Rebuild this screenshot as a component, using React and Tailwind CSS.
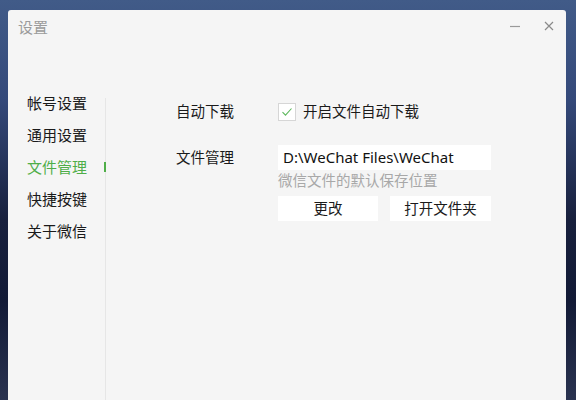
import React from 'react';

const menu = ['帐号设置', '通用设置', '文件管理', '快捷按键', '关于微信'];

const Settings = () => {
    const active = '文件管理';

    return (
        <div
            className="w-[576px] h-[400px] overflow-hidden bg-[linear-gradient(180deg,#415b88_0%,#34497a_25%,#18203d_55%,#121a36_75%,#2a3350_100%)]"
            style={{ fontFamily: '"Noto Sans", "Noto Sans CJK SC", sans-serif' }}
        >
            <div className="mt-[10px] ml-[8px] w-[558px] h-[400px] bg-[#f5f5f5] rounded-t-[3px] flex flex-col">
                {/* Title bar */}
                <div className="h-[77px] flex items-start justify-between">
                    <div className="pl-[10px] pt-[7px] text-[15px] leading-[20px] text-[#9b9b9b]">设置</div>
                    <div className="flex items-center gap-[20px] pt-[9px] pr-[10px]">
                        <svg width="14" height="14" viewBox="0 0 14 14">
                            <path d="M2 7.5h10" stroke="#9a9a9a" strokeWidth="1.2" />
                        </svg>
                        <svg width="14" height="14" viewBox="0 0 14 14">
                            <path d="M3 3l8 8M11 3l-8 8" stroke="#8a8a8a" strokeWidth="1.2" />
                        </svg>
                    </div>
                </div>

                {/* Body */}
                <div className="flex flex-1">
                    {/* Sidebar */}
                    <div className="w-[97px] shrink-0">
                        {menu.map(item => (
                            <div
                                key={item}
                                className={`h-[32px] flex items-center pl-[19px] text-[15px] ${item === active ? 'text-[#4fae48]' : 'text-[#1a1a1a]'}`}
                            >
                                {item}
                            </div>
                        ))}
                    </div>
                    <div className="relative w-px mt-[11px] bg-[#e6e6e6] shrink-0">
                        <div className="absolute left-[-1px] top-[64px] w-[2px] h-[10px] bg-[#4fae48]" />
                    </div>

                    {/* Content */}
                    <div className="pl-[70px] pt-[16px] text-[14.5px] text-[#1a1a1a]">
                        <div className="flex items-center h-[18px]">
                            <div className="w-[102px]">自动下载</div>
                            <div className="w-[18px] h-[18px] bg-white border border-[#d6d6d6] flex items-center justify-center">
                                <svg width="12" height="12" viewBox="0 0 12 12">
                                    <path d="M1.5 6.2l3 3L10.5 2.5" fill="none" stroke="#5cb85c" strokeWidth="1.1" />
                                </svg>
                            </div>
                            <div className="ml-[7px]">开启文件自动下载</div>
                        </div>

                        <div className="flex mt-[24px]">
                            <div className="w-[102px] h-[25px] flex items-center">文件管理</div>
                            <div>
                                <div className="w-[213px] h-[25px] bg-white flex items-center pl-[5px] text-[15px] text-[#111]">
                                    D:\WeChat Files\WeChat
                                </div>
                                <div className="h-[20px] mt-[1px] flex items-center text-[#a8a8a8]">微信文件的默认保存位置</div>
                                <div className="flex gap-[12px] mt-[5px]">
                                    <button className="w-[100px] h-[25px] bg-white flex items-center justify-center">更改</button>
                                    <button className="w-[101px] h-[25px] bg-white flex items-center justify-center">打开文件夹</button>
                                </div>
                            </div>
                        </div>
                    </div>
                </div>
            </div>
        </div>
    );
};

export default function App() {
    return <Settings />;
}
